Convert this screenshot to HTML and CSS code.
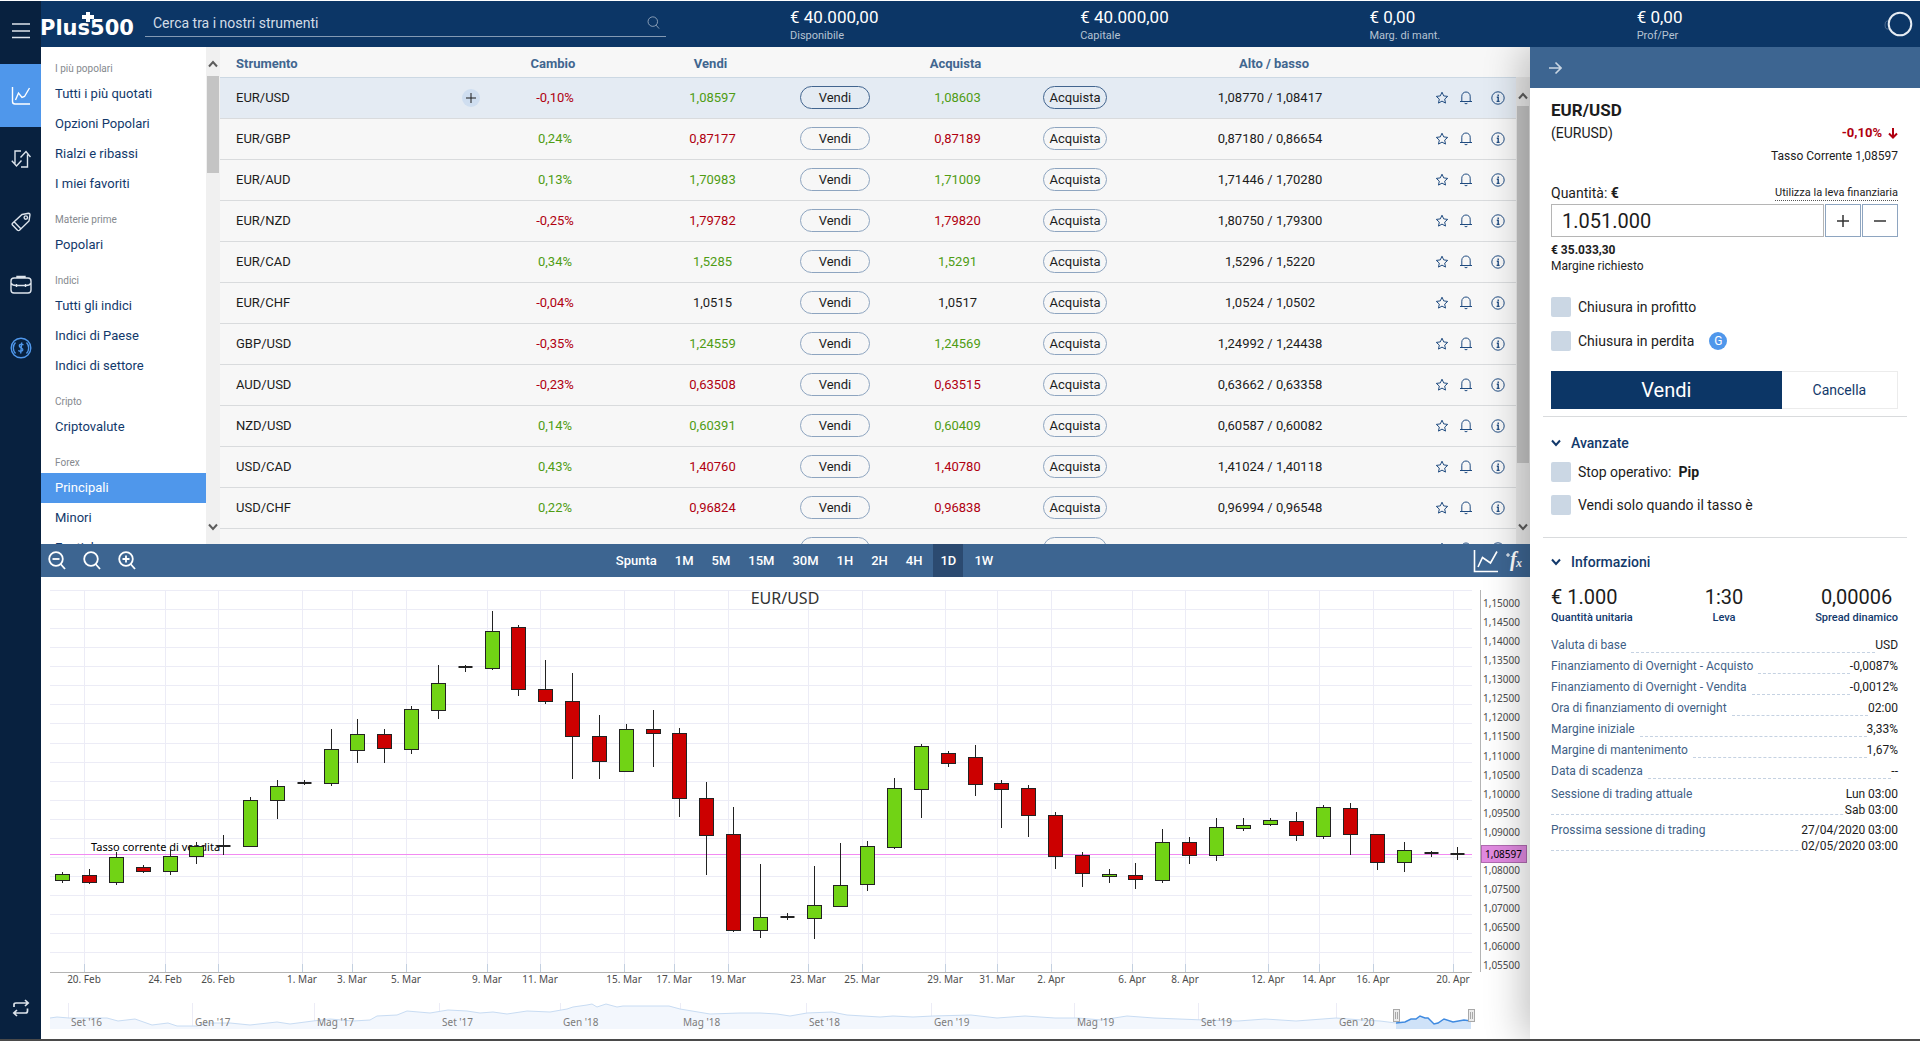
FILE: index.html
```html
<!DOCTYPE html>
<html lang="it">
<head>
<meta charset="utf-8">
<title>Plus500 - EUR/USD</title>
<link rel="stylesheet" href="styles.css">
</head>
<body>
<svg class="defs" aria-hidden="true">
  <symbol id="i-star" viewBox="0 0 14 14"><path d="M7 1.2l1.7 3.7 4 .5-3 2.7.8 4L7 10.1l-3.5 2 .8-4-3-2.7 4-.5z"/></symbol>
  <symbol id="i-bell" viewBox="0 0 14 14"><path d="M1 10.5h12M2.8 10.5V5.2a4.2 4.2 0 0 1 8.4 0v5.3M5.600 12.300q1.400 1 2.800 0"/></symbol>
  <symbol id="i-info" viewBox="0 0 14 14"><circle cx="7" cy="7" r="6.2"/><path class="thick" d="M5.8 6.2H7.2V10.4M5.6 10.4h3M7.2 3.4v1.5"/></symbol>
  <symbol id="i-lens" viewBox="0 0 18 20"><circle cx="8" cy="8" r="6.8"/><path d="M12.6 13l4.4 5"/></symbol>
  <symbol id="i-up" viewBox="0 0 10 8"><path d="M1 6.5L5 2l4 4.500"/></symbol>
  <symbol id="i-down" viewBox="0 0 10 8"><path d="M1 1.500L5 6l4-4.500"/></symbol>
</svg>
<div class="app">
  <nav class="rail" aria-label="Menu principale">
    <button class="rail-item" aria-label="Menu"><svg width="20" height="18"><path d="M1 2h18M1 9h18M1 15.500h18" stroke-width="1.600"/></svg></button>
    <a class="rail-item active" href="#" aria-label="Mercati"><svg width="20" height="20"><path d="M1.500 1v14.500q0 2.500 2.500 2.500h15M4.500 14l3-7 3.500 4.500 2.500-1L18.500 2"/></svg></a>
    <a class="rail-item" href="#" aria-label="Posizioni"><svg width="20" height="20"><path d="M10 2H4v12.500M.8 11.800L5.500 17l5-5.500M10 18h6.500V5.500M19.500 8L15 2.500 9.500 8.500"/></svg></a>
    <a class="rail-item" href="#" aria-label="Ordini"><svg width="20" height="20"><path d="M11 2.500l6.500-1.300q1.500 0 1.500 1.500L18 9l-9.500 9.300q-1 .7-2 0L1.500 13q-.8-1 0-1.800zM3.300 10l6.500 6.700"/><circle cx="14.800" cy="5.600" r="1.700"/></svg></a>
    <a class="rail-item" href="#" aria-label="Chiuse"><svg width="22" height="20"><path d="M7 3V1.500h8V3M4 3h14q3 0 3 3v9q0 3-3 3H4q-3 0-3-3V6q0-3 3-3zM1 8q1 2.500 5 2.500h10q4 0 5-2.500M6.500 9v3M15.500 9v3"/></svg></a>
    <a class="rail-item coin" href="#" aria-label="Fondi"><svg width="22" height="22"><circle cx="11" cy="11" r="9.800"/><path d="M5.500 16.500A8 8 0 0 1 5.500 5.500M16.500 5.500a8 8 0 0 1 0 11M13.500 8q-2.500-1.700-4 0c-1.200 3 4 2.500 3.300 5-.8 1.800-3 1.500-4.500.5M11.700 5.500l-1 11"/></svg></a>
    <button class="rail-item last" aria-label="Modalità"><svg width="18" height="18"><path d="M2 8V5.500Q2 4 4 4h12M13 1l3.200 3L13 7M15.500 9.500V12q0 2-2 2H2M5 11l-3.200 3L5 17" stroke-width="1.700"/></svg></button>
  </nav>
  <div class="page">
    <header class="top">
      <a class="logo" href="#" aria-label="Plus500"><svg width="98" height="30"><text x="-1" y="26">Plus500</text><path d="M45 3h4v3h4v4h-4v3h-4v-3h-4V6h4z"/></svg></a>
      <label class="search"><input type="text" placeholder="Cerca tra i nostri strumenti" aria-label="Cerca"><svg width="13" height="14"><use href="#i-lens"/></svg></label>
      <dl class="balance">
        <div><dd>€ 40.000,00</dd><dt>Disponibile</dt></div>
        <div><dd>€ 40.000,00</dd><dt>Capitale</dt></div>
        <div><dd>€ 0,00</dd><dt>Marg. di mant.</dt></div>
        <div><dd>€ 0,00</dd><dt>Prof/Per</dt></div>
      </dl>
      <svg class="ring" width="30" height="26"><path d="M5 10H3q-2 0-2 4t2 4h2" class="dim"/><circle cx="16" cy="13" r="11.300"/></svg>
    </header>
    <div class="body">
      <main class="main">
        <div class="market">
          <nav class="cats" aria-label="Categorie">
            <h2>I più popolari</h2><a href="#">Tutti i più quotati</a><a href="#">Opzioni Popolari</a><a href="#">Rialzi e ribassi</a><a href="#">I miei favoriti</a>
            <h2>Materie prime</h2><a href="#">Popolari</a>
            <h2>Indici</h2><a href="#">Tutti gli indici</a><a href="#">Indici di Paese</a><a href="#">Indici di settore</a>
            <h2>Cripto</h2><a href="#">Criptovalute</a>
            <h2>Forex</h2><a href="#" class="on">Principali</a><a href="#">Minori</a><a href="#">Esotiche</a>
          </nav>
          <div class="bar bar-cats"><svg width="10" height="8"><use href="#i-up"/></svg><i></i><svg width="10" height="8"><use href="#i-down"/></svg></div>
          <section class="quotes">
            <table>
              <thead><tr><th class="c-name">Strumento</th><th class="c-chg">Cambio</th><th class="c-price">Vendi</th><th class="c-sell"></th><th class="c-price">Acquista</th><th class="c-buy"></th><th class="c-range">Alto / basso</th><th class="c-act"></th></tr></thead>
              <tbody id="rows"></tbody>
            </table>
            <div class="bar bar-quotes"><svg width="10" height="8"><use href="#i-up"/></svg><i></i><svg width="10" height="8"><use href="#i-down"/></svg></div>
          </section>
        </div>
        <section class="chart">
          <div class="tools">
            <div class="zoom">
              <button aria-label="Riduci"><svg width="18" height="20"><use href="#i-lens"/><path d="M4.500 8h7"/></svg></button>
              <button aria-label="Reimposta"><svg width="18" height="20"><use href="#i-lens"/></svg></button>
              <button aria-label="Ingrandisci"><svg width="18" height="20"><use href="#i-lens"/><path d="M4.500 8h7M8 4.500v7"/></svg></button>
            </div>
            <div class="spans"><button>Spunta</button><button>1M</button><button>5M</button><button>15M</button><button>30M</button><button>1H</button><button>2H</button><button>4H</button><button class="on">1D</button><button>1W</button></div>
            <div class="extra">
              <button aria-label="Tipo di grafico"><svg width="26" height="24"><path d="M1.500 1v21.500H25M5 18l4.500-9.500 8 5.500L24 2.500"/></svg></button>
              <button aria-label="Indicatori"><svg width="20" height="24"><path class="thin" d="M3 4v4M1 6h4"/><text class="f" x="5" y="17">f</text><text class="x" x="11" y="18">x</text></svg></button>
            </div>
          </div>
          <svg id="plot" class="plot" viewBox="0 0 1489 462" role="img" aria-label="Grafico EUR/USD"></svg>
        </section>
      </main>
      <aside class="ticket">
        <div class="strip"><button aria-label="Chiudi"><svg width="13" height="14"><path d="M0 7h11.500M6.500 1.500L12 7l-5.500 5.500"/></svg></button></div>
        <form class="order" onsubmit="return false">
          <h1>EUR/USD</h1>
          <p class="pair"><span>(EURUSD)</span><b>-0,10% <svg width="10" height="11"><path d="M5 0v9.500M1 5.500l4 4 4-4"/></svg></b></p>
          <p class="rate">Tasso Corrente 1,08597</p>
          <p class="qty"><label for="amount">Quantità: <b>€</b></label><a href="#">Utilizza la leva finanziaria</a></p>
          <div class="stepper"><input id="amount" type="text" value="1.051.000"><button aria-label="Aumenta"><svg width="12" height="12"><path d="M0 6h12M6 0v12"/></svg></button><button aria-label="Diminuisci"><svg width="12" height="12"><path d="M0 6h12"/></svg></button></div>
          <p class="margin"><b>€ 35.033,30</b><br>Margine richiesto</p>
          <label class="tick"><input type="checkbox">Chiusura in profitto</label>
          <label class="tick"><input type="checkbox">Chiusura in perdita <span class="badge">G</span></label>
          <div class="actions"><button class="go">Vendi</button><button class="cancel">Cancella</button></div>
        </form>
        <section class="block adv">
          <h2><svg width="10" height="8"><use href="#i-down"/></svg>Avanzate</h2>
          <label class="tick"><input type="checkbox">Stop operativo: <b>Pip</b></label>
          <label class="tick"><input type="checkbox">Vendi solo quando il tasso è</label>
        </section>
        <section class="block info">
          <h2><svg width="10" height="8"><use href="#i-down"/></svg>Informazioni</h2>
          <dl class="facts"><div><dd>€ 1.000</dd><dt>Quantità unitaria</dt></div><div><dd>1:30</dd><dt>Leva</dt></div><div><dd>0,00006</dd><dt>Spread dinamico</dt></div></dl>
          <dl class="list">
            <div><dt>Valuta di base</dt><dd>USD</dd></div>
            <div><dt>Finanziamento di Overnight - Acquisto</dt><dd>-0,0087%</dd></div>
            <div><dt>Finanziamento di Overnight - Vendita</dt><dd>-0,0012%</dd></div>
            <div><dt>Ora di finanziamento di overnight</dt><dd>02:00</dd></div>
            <div><dt>Margine iniziale</dt><dd>3,33%</dd></div>
            <div><dt>Margine di mantenimento</dt><dd>1,67%</dd></div>
            <div><dt>Data di scadenza</dt><dd>--</dd></div>
            <div class="two"><dt>Sessione di trading attuale</dt><dd>Lun 03:00<br>Sab 03:00</dd></div>
            <div class="two"><dt>Prossima sessione di trading</dt><dd>27/04/2020 03:00<br>02/05/2020 03:00</dd></div>
          </dl>
        </section>
      </aside>
    </div>
  </div>
</div>
<script src="app.js"></script>
</body>
</html>
```
FILE: styles.css
```css
* { box-sizing: border-box; }
body { margin: 0; font: 14px/20px Roboto, sans-serif; color: #1c1c1c; background: #fff; }
button, input { font: inherit; color: inherit; margin: 0; padding: 0; border: 0; background: none; }
h1, h2, p, dl, dd, dt { margin: 0; }
a { color: inherit; text-decoration: none; }
b { font-weight: 700; }
svg { display: block; fill: none; stroke: currentColor; flex: none; }
svg text { stroke: none; fill: currentColor; }
.defs { display: none; }

.app { display: flex; height: 100vh; border-top: 1px solid #fff; border-bottom: 2px solid #4a4a4a; overflow: hidden; }
.page { flex: 1; min-width: 0; display: flex; flex-direction: column; }

.rail { width: 41px; display: flex; flex-direction: column; background: #08213f; color: #dde4ec; }
.rail-item { width: 41px; height: 63px; display: flex; align-items: center; justify-content: center; }
.rail-item:first-child { padding-bottom: 4px; }
.rail-item svg { stroke-width: 1.4; }
.rail .active { background: #4f97eb; color: #fff; }
.rail .coin { color: #4f97eb; }
.rail .last { margin-top: auto; }

.top { height: 46px; display: flex; align-items: center; background: #0c3666; color: #fff; position: relative; z-index: 3; flex: none; }
.logo { width: 104px; }
.logo text { font: bold 21px "DejaVu Sans", sans-serif; }
.logo path { fill: #fff; stroke: #0c3666; stroke-width: 1; paint-order: stroke; }
.search { width: 521px; height: 26px; display: flex; align-items: center; padding: 0 6px 2px 8px; border-bottom: 1px solid #8399b3; color: #b9c6d6; }
.search input { flex: 1; outline: 0; }
.search input::placeholder { color: #d3dce6; opacity: 1; }
.balance { flex: 1; display: grid; grid-template-columns: 291fr 290fr 268fr 248fr; padding: 2px 0 0 124px; }
.balance div { display: flex; flex-direction: column; }
.balance dd { font-size: 17px; line-height: 20px; }
.balance dt { font-size: 11px; line-height: 14px; color: #b6c3d3; margin-top: 2px; }
.ring { margin-right: 6px; stroke-width: 2; color: #e6ecf3; }
.ring .dim { stroke: #4c6a8f; stroke-width: 1; }

.body { flex: 1; min-height: 0; display: flex; }
.main { flex: 1; min-width: 0; display: flex; flex-direction: column; }
.market { flex: 1; min-height: 0; display: flex; overflow: hidden; font-size: 13px; }
.cats { width: 165px; padding-top: 1px; overflow: hidden; background: #fff; color: #12396b; flex: none; }
.cats h2 { height: 31px; padding: 11px 0 0 14px; font-size: 10px; font-weight: 400; line-height: 20px; color: #85898e; }
.cats a { display: block; line-height: 30px; padding-left: 14px; }
.cats .on { background: #4f97eb; color: #fff; }
.bar { width: 14px; display: flex; flex-direction: column; align-items: center; background: #f0f0f0; color: #5c5c5c; stroke-width: 2; flex: none; }
.bar i { width: 12px; background: #c4c4c4; margin: 8px 0 auto; }
.bar-cats { padding: 13px 0; }
.bar-cats i { height: 97px; }
.quotes { flex: 1; min-width: 0; position: relative; overflow: hidden; background: #f7f7f7; }
.bar-quotes { position: absolute; top: 30px; right: 0; bottom: 0; padding: 15px 0 13px; background: #e8e8e8; }
.bar-quotes i { height: 357px; margin-top: 6px; }
.quotes table { width: 100%; border-collapse: collapse; table-layout: fixed; }
.quotes th { height: 30px; padding: 4px 4px 0 0; line-height: 16px; color: #41668f; font-weight: 700; border-bottom: 1px solid #ccd8e3; }
.quotes td { height: 41px; padding: 0; text-align: center; border-bottom: 1px solid #d9dbdd; }
.quotes .c-name { text-align: left; padding-left: 16px; }
.quotes th.c-range { padding-left: 12px; }
.c-chg { width: 150px; }
.c-price { width: 165px; }
.c-sell { width: 80px; }
.c-buy { width: 70px; }
.c-range { width: 320px; }
.c-act { width: 100px; }
.sel td { background: #e4ebf3; }
.name { display: flex; justify-content: space-between; align-items: center; }
.name button { width: 18px; height: 18px; border-radius: 9px; background: #cfdef0; display: grid; place-items: center; }
.quotes .up { color: #4f9c14; }
.quotes .dn { color: #b00010; }
.pill { display: block; margin: 0 auto; width: 70px; height: 23px; line-height: 21px; border: 1px solid #8ea5c0; border-radius: 12px; }
.pill.buy { width: 64px; }
.sel .pill { border-color: #42658f; }
.acts { display: flex; gap: 10px; padding-left: 5px; color: #1f4b80; }
.acts button:nth-child(3) { margin-left: 8px; }
.acts svg { width: 14px; height: 14px; }
.thick { stroke-width: 1.4; }

.tools { height: 33px; display: flex; align-items: center; background: #3d6591; color: #fff; }
.zoom { display: flex; gap: 17px; padding-left: 7px; stroke-width: 1.8; }
.spans { display: flex; gap: 4px; margin: 0 auto; align-self: stretch; font-size: 13px; font-weight: 500; }
.spans button { padding: 0 7px; }
.spans .on { background: #2b4a70; }
.extra { display: flex; gap: 6px; padding-right: 5px; }
.extra svg { stroke-width: 1.6; }
.extra .thin { stroke-width: 1; }
.extra .f { font: italic bold 20px "Liberation Serif", serif; }
.extra .x { font: italic bold 12px "Liberation Serif", serif; }
.plot { width: 100%; height: auto; background: #fff; font: 10px "Noto Sans", sans-serif; }
.plot .label { fill: #4c4c4c; }
.plot .mid { text-anchor: middle; }
.plot .title { font-size: 16px; fill: #333; }
.plot .cap { fill: #000; }
.plot .wide { font-size: 11px; }
.plot .period { fill: #7b7b7b; }
.plot .grid { stroke: #ececf6; }
.plot .axis { stroke: #b4b4b4; }
.plot .ticks { stroke: #c3d0e0; }
.plot .now { stroke: #f28af2; }
.plot .tag { fill: #e08ae0; stroke: #b06ab0; }
.plot .candle { stroke: #222; }
.plot .flat { stroke-width: 2; }
.plot .g { fill: #71d315; }
.plot .r { fill: #cc0000; }
.plot .area { fill: #f3f7fd; stroke: none; }
.plot .line { stroke: #c8dcf3; }
.plot .area-on { fill: #cfe2f8; stroke: none; }
.plot .line-on { stroke: #3f8ae0; stroke-width: 1.5; }
.plot .handle { fill: #ebebeb; stroke: #a8a8a8; }

.ticket { width: 390px; background: #fff; position: relative; z-index: 2; box-shadow: -8px 0 36px rgba(0, 0, 0, .24); flex: none; }
.strip { height: 41px; padding: 14px 19px; background: #3d6591; color: #c9d5e2; }
.strip button { display: block; }
.strip svg { stroke-width: 1.6; }
.order { padding: 10px 22px 7px 21px; }
.order h1 { font-size: 17px; line-height: 24px; font-weight: 700; }
.pair { display: flex; justify-content: space-between; line-height: 22px; }
.pair b { display: flex; align-items: center; gap: 6px; color: #b00010; font-size: 13px; }
.pair svg { stroke-width: 2; }
.rate { text-align: right; font-size: 12px; line-height: 24px; }
.qty { display: flex; justify-content: space-between; align-items: center; margin-top: 14px; height: 22px; }
.qty a { font-size: 11px; line-height: 14px; border-bottom: 1px dotted #555; }
.stepper { display: flex; gap: 1px; height: 33px; }
.stepper input { flex: 1; min-width: 0; padding-left: 10px; font-size: 20px; border: 1px solid #b5b5b5; }
.stepper button { width: 36px; border: 1px solid #8ea5c0; display: grid; place-items: center; color: #333; }
.stepper svg { stroke-width: 1.5; }
.margin { margin: 5px 0 23px; font-size: 12px; line-height: 16px; }
.tick { display: flex; align-items: center; gap: 7px; height: 20px; margin-bottom: 14px; }
.tick input { appearance: none; width: 20px; height: 20px; border-radius: 2px; background: #cbd7e4; flex: none; }
.badge { width: 18px; height: 18px; margin-left: 8px; border-radius: 9px; background: #4f97eb; color: #fff; font-size: 12px; line-height: 18px; text-align: center; }
.actions { display: flex; height: 38px; margin-top: 20px; }
.go { flex: 2; background: #0c3666; color: #fff; font-size: 20px; }
.cancel { flex: 1; border: 1px solid #ececec; border-left: 0; color: #12396b; }
.block { margin: 0 13px; padding: 16px 9px 0 8px; border-top: 1px solid #d9dbdd; }
.adv { padding-bottom: 9px; }
.adv .tick { margin-bottom: 13px; }
.block h2 { display: flex; align-items: center; gap: 10px; font-size: 14px; line-height: 20px; font-weight: 500; color: #12396b; margin-bottom: 9px; }
.block h2 svg { stroke-width: 2; }
.info { padding-top: 14px; }
.info h2 { margin-bottom: 13px; }
.facts { display: flex; justify-content: space-between; }
.facts div { text-align: center; display: flex; flex-direction: column; }
.facts div:first-child { text-align: left; }
.facts dd { font-size: 20px; line-height: 24px; }
.facts dt { font-size: 11px; line-height: 18px; font-weight: 500; color: #12396b; }
.list { margin-top: 8px; font-size: 12px; }
.list div { display: flex; justify-content: space-between; height: 21px; line-height: 21px; }
.list div::before { content: ""; order: 1; flex: 1; height: 17px; margin-left: 5px; border-bottom: 1px dashed #c5d2e2; }
.list dt { color: #3f5f86; }
.list dd { order: 2; text-align: right; }
.list .two { height: 36px; line-height: 16px; padding-top: 4px; position: relative; }
.list .two::before { order: 0; position: absolute; left: 0; right: 0; bottom: 3px; height: 1px; margin: 0; }
.list .two dd { background: #fff; position: relative; height: 32px; }
```
FILE: app.js
```js
const quotes = [
  ['EUR/USD', '-0,10%', '1,08597', '1,08603', '1,08770 / 1,08417', 'up'],
  ['EUR/GBP', '0,24%', '0,87177', '0,87189', '0,87180 / 0,86654', 'dn'],
  ['EUR/AUD', '0,13%', '1,70983', '1,71009', '1,71446 / 1,70280', 'up'],
  ['EUR/NZD', '-0,25%', '1,79782', '1,79820', '1,80750 / 1,79300', 'dn'],
  ['EUR/CAD', '0,34%', '1,5285', '1,5291', '1,5296 / 1,5220', 'up'],
  ['EUR/CHF', '-0,04%', '1,0515', '1,0517', '1,0524 / 1,0502', ''],
  ['GBP/USD', '-0,35%', '1,24559', '1,24569', '1,24992 / 1,24438', 'up'],
  ['AUD/USD', '-0,23%', '0,63508', '0,63515', '0,63662 / 0,63358', 'dn'],
  ['NZD/USD', '0,14%', '0,60391', '0,60409', '0,60587 / 0,60082', 'up'],
  ['USD/CAD', '0,43%', '1,40760', '1,40780', '1,41024 / 1,40118', 'dn'],
  ['USD/CHF', '0,22%', '0,96824', '0,96838', '0,96994 / 0,96548', 'dn'],
  ['', '', '', '', '', '']
];
const icon = (id, name) => `<button aria-label="${name}"><svg><use href="#i-${id}"/></svg></button>`;
document.getElementById('rows').innerHTML = quotes.map(([name, chg, sell, buy, range, dir], i) => `
<tr class="${i ? '' : 'sel'}">
<td class="c-name"><div class="name">${name}${i ? '' : '<button aria-label="Aggiungi"><svg width="10" height="10"><path d="M0 5h10M5 0v10"/></svg></button>'}</div></td>
<td class="${chg[0] === '-' ? 'dn' : 'up'}">${chg}</td><td class="${dir}">${sell}</td>
<td><button class="pill">${name && 'Vendi'}</button></td><td class="${dir}">${buy}</td>
<td><button class="pill buy">${name && 'Acquista'}</button></td><td>${range}</td>
<td><div class="acts">${icon('star', 'Preferito')}${icon('bell', 'Avviso')}${icon('info', 'Dettagli')}</div></td></tr>`).join('');

// One entry per day: g up, r down, d flat; then high, body top, body bottom, low (chart units).
const candles = `g295,297,303,306 r292,298,305,307 g275,280,305,308 r288,290,294,296 g272,279,294,298 g265,269,279,287
d258,268,268,278 g220,223,269,270 g203,209,223,242 d203,205,205,208 g152,172,206,209 g142,157,173,186 r152,157,171,186
g129,132,172,177 g88,106,133,142 d88,89,90,95 g34,54,91,93 r48,50,112,119 r83,112,124,127 r96,124,159,202 r138,159,184,202
g147,152,194,195 r133,152,156,190 r151,156,221,240 r205,221,258,298 r230,257,353,355 g287,340,353,361 d336,339,339,343
g289,328,341,362 g266,308,329,330 g264,269,307,314 g201,211,270,272 g167,169,212,241 r174,176,186,190 r168,180,207,219
r203,206,212,251 r208,211,238,260 r235,238,279,292 r275,278,296,310 g292,297,299,306 r286,298,302,312 g252,265,303,306
r260,265,278,287 g241,250,278,284 g241,248,251,254 g241,243,247,249 r235,244,258,264 g228,230,259,262 r226,231,257,278
r257,257,285,293 g265,273,285,295 d274,275,275,280 d270,276,277,283`.split(/\s+/);
const days = [[43, '20. Feb'], [124, '24. Feb'], [177, '26. Feb'], [261, '1. Mar'], [311, '3. Mar'], [365, '5. Mar'],
  [446, '9. Mar'], [499, '11. Mar'], [583, '15. Mar'], [633, '17. Mar'], [687, '19. Mar'], [767, '23. Mar'], [821, '25. Mar'],
  [904, '29. Mar'], [956, '31. Mar'], [1010, '2. Apr'], [1091, '6. Apr'], [1144, '8. Apr'], [1227, '12. Apr'],
  [1278, '14. Apr'], [1332, '16. Apr'], [1412, '20. Apr']];
const periods = [[30, "Set '16"], [154, "Gen '17"], [276, "Mag '17"], [401, "Set '17"], [522, "Gen '18"], [642, "Mag '18"],
  [768, "Set '18"], [893, "Gen '19"], [1036, "Mag '19"], [1160, "Set '19"], [1298, "Gen '20"]];
const past = '9,441 16,440 28,441 66,441 77,444 94,442 111,448 127,446 136,449 156,449 167,446 189,446 209,448 236,445 249,447 272,444 289,442 312,444 329,443 336,439 356,438 366,434 389,436 407,433 426,434 439,436 452,435 466,437 486,434 509,435 526,432 532,430 546,428 551,427 556,430 565,427 576,430 582,429 602,429 628,429 639,432 669,437 699,436 719,436 736,437 749,439 766,436 791,435 806,438 839,440 852,439 872,440 892,439 930,438 956,441 984,439 1014,441 1037,441 1060,443 1086,439 1113,441 1163,443 1197,444 1224,442 1255,444 1295,441 1320,443 1339,444 1355,446';
const recent = '1355,446 1364,445 1370,442 1375,442 1379,439 1384,441 1387,441 1393,447 1397,446 1403,442 1412,445 1423,443 1430,444';

const rowY = k => Math.round(13 + k * 19.07) + 0.5;
let out = '';
for (let k = 0; k < 20; k++) out += `<path class="grid" d="M9 ${rowY(k)}H1431"/>`;
days.forEach(([x]) => { out += `<path class="grid" d="M${x}.5 13V395"/><path class="ticks" d="M${x}.5 387V395"/>`; });
out += '<path class="axis" d="M9 395.500H1431M1439.500 13V395"/>';
out += '<text class="title mid" x="744" y="27">EUR/USD</text><path class="now" d="M9 277.500H1431"/><text class="cap wide" x="50" y="274">Tasso corrente di vendita</text>';
candles.forEach((c, i) => {
  const [h, t, b, l] = c.slice(1).split(',').map(Number);
  const x = Math.round(21.3 + i * 26.83) + 0.5;
  out += `<path class="candle" d="M${x} ${h}V${l}"/>`;
  out += c[0] === 'd'
    ? `<path class="candle flat" d="M${x - 7} ${t + 1}h14"/>`
    : `<rect class="candle ${c[0]}" x="${x - 7}" y="${t + 0.5}" width="14" height="${b - t}"/>`;
});
days.forEach(([x, s]) => { out += `<text class="label mid" x="${x}" y="406">${s}</text>`; });
for (let k = 0; k < 20; k++) {
  if (k !== 13) out += `<text class="label" x="1442" y="${Math.round(30 + k * 19.07)}">${(1.15 - k * 0.005).toFixed(5).replace('.', ',')}</text>`;
}
out += '<rect class="tag" x="1440.500" y="268.500" width="45" height="17"/><text class="cap" x="1444" y="281">1,08597</text>';
periods.forEach(([x]) => { out += `<path class="grid" d="M${x - 3}.5 426V452"/>`; });
out += `<polygon class="area" points="9,452 ${past} 1355,452"/><polyline class="line" points="${past}"/>`;
out += `<polygon class="area-on" points="1355,452 ${recent} 1430,452"/><polyline class="line-on" points="${recent}"/>`;
periods.forEach(([x, s]) => { out += `<text class="period" x="${x}" y="449">${s}</text>`; });
[1352, 1427].forEach(x => { out += `<rect class="handle" x="${x}.5" y="432.500" width="6" height="12"/><path class="handle" d="M${x + 2}.5 435v7M${x + 4}.5 435v7"/>`; });
document.getElementById('plot').innerHTML = out;
```
